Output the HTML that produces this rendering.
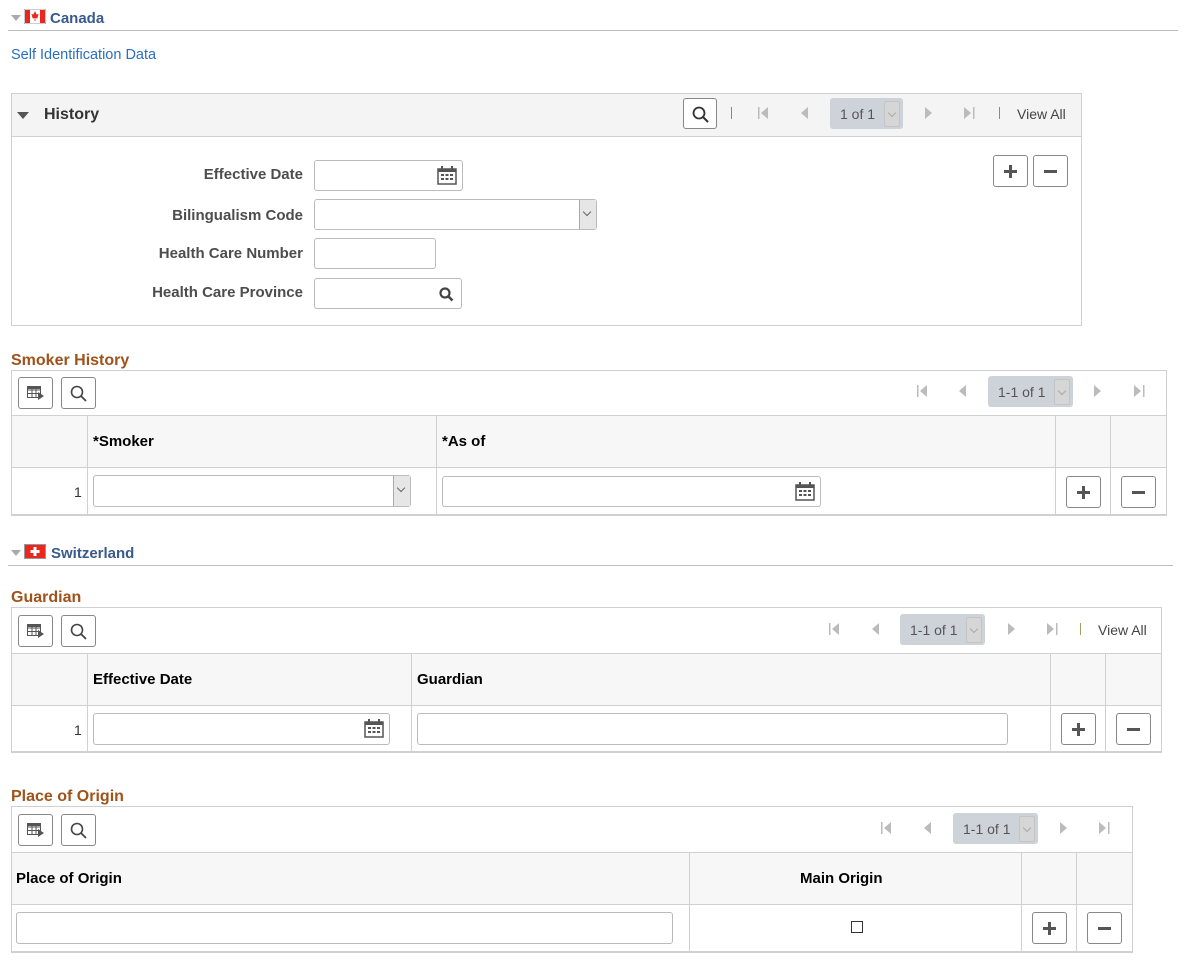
<!DOCTYPE html>
<html><head><meta charset="utf-8"><style>
*{box-sizing:border-box;margin:0;padding:0}
body{width:1190px;height:963px;background:#fff;font-family:"Liberation Sans",Arial,sans-serif;position:relative;overflow:hidden;color:#333}
.a{position:absolute}
.sec{font-weight:bold;font-size:15px;color:#3a5a8c}
.ttl{font-weight:bold;font-size:16px;color:#a0521b}
.lbl{font-weight:bold;font-size:15px;color:#4d4d4d;text-align:right;width:200px}
.in{border:1px solid #bbb;border-radius:3px;background:#fff}
.btn{border:1px solid #888;border-radius:3px;background:#fff;width:35px;height:32px}
.hd{font-weight:bold;font-size:15px;color:#000}
.pg{background:#ced3da;border-radius:3px;height:31px;font-size:14px;color:#555;line-height:31px;padding-left:10px}
.pg i{position:absolute;right:3px;top:3px;width:16px;height:26px;background:#d6d6d6;border:1px solid #c4c4c4;border-radius:2px}
.pg i:after{content:"";position:absolute;left:4px;top:8px;width:5px;height:5px;border-right:1px solid #aaa;border-bottom:1px solid #aaa;transform:rotate(45deg)}
.dd{position:absolute;right:0;top:0;bottom:0;width:17px;background:#e6e6e6;border-left:1px solid #aaa}
.chev{position:absolute;left:4px;top:9px;width:6px;height:6px;border-right:1px solid #666;border-bottom:1px solid #666;transform:rotate(45deg)}
.sep{width:1px;height:12px;background:#888}
.vl{width:1px;background:#d0d0d0}
</style></head><body>

<div class="a" style="left:11px;top:15px;width:0;height:0;border-left:5px solid transparent;border-right:5px solid transparent;border-top:6px solid #aaa"></div>
<svg class="a" style="left:24px;top:9px" width="22" height="15"><rect x="0" y="0" width="22" height="15" fill="#fff" stroke="#999"/><rect x="1" y="1" width="5" height="13" fill="#e8281e"/><rect x="16" y="1" width="5" height="13" fill="#e8281e"/><path d="M11 3 L12.5 6 L14 5.5 L13 9 L11 8.5 L9 9 L8 5.5 L9.5 6 Z M11 9 V12" fill="#e8281e" stroke="#e8281e" stroke-width=".8"/></svg>
<div class="a sec" style="left:50px;top:10px">Canada</div>
<div class="a" style="left:8px;top:30px;width:1170px;height:1px;background:#bbb"></div>
<div class="a" style="left:11px;top:47px;font-size:14.5px;color:#2a6ebf">Self Identification Data</div>

<div class="a" style="left:11px;top:93px;width:1071px;height:233px;border:1px solid #d0d0d0"></div>
<div class="a" style="left:12px;top:94px;width:1069px;height:43px;background:#f4f4f4;border-bottom:1px solid #d0d0d0"></div>
<div class="a" style="left:17px;top:112px;width:0;height:0;border-left:6px solid transparent;border-right:6px solid transparent;border-top:7px solid #555"></div>
<div class="a" style="left:44px;top:106px;font-size:16px;font-weight:bold;color:#333">History</div>
<div class="a btn" style="left:683px;top:98px;width:34px;height:31px"><svg class="a" style="left:8px;top:7px" width="18" height="18"><circle cx="7" cy="7" r="5.5" stroke="#333" stroke-width="1.8" fill="none"/><line x1="11" y1="11" x2="16" y2="16" stroke="#333" stroke-width="2"/></svg></div>
<div class="a sep" style="left:731px;top:107px"></div>
<svg class="a" style="left:758px;top:107px" width="12" height="12"><rect x="0" y="0" width="1.5" height="12" fill="#bbb"/><path d="M10 0 L3 6 L10 12Z" fill="#bbb"/></svg>
<svg class="a" style="left:800px;top:107px" width="10" height="12"><path d="M8 0 L1 6 L8 12Z" fill="#bbb"/></svg>
<div class="a pg" style="left:830px;top:98px;width:73px;padding-top:1px">1 of 1<i></i></div>
<svg class="a" style="left:924px;top:107px" width="10" height="12"><path d="M1 0 L8 6 L1 12Z" fill="#bbb"/></svg>
<svg class="a" style="left:963px;top:107px" width="12" height="12"><path d="M1 0 L8 6 L1 12Z" fill="#bbb"/><rect x="10" y="0" width="1.5" height="12" fill="#bbb"/></svg>
<div class="a sep" style="left:999px;top:107px;background:#4a9"></div>
<div class="a" style="left:1017px;top:106px;font-size:14px;color:#444">View All</div>
<div class="a btn" style="left:993px;top:155px;width:35px;height:32px"><div class="a" style="left:10px;top:14px;width:13px;height:3px;background:#555"></div><div class="a" style="left:15px;top:9px;width:3px;height:13px;background:#555"></div></div>
<div class="a btn" style="left:1033px;top:155px;width:35px;height:32px"><div class="a" style="left:10px;top:14px;width:13px;height:3px;background:#555"></div></div>

<div class="a lbl" style="left:103px;top:166px">Effective Date</div>
<div class="a in" style="left:314px;top:160px;width:149px;height:31px"><svg class="a" style="left:122px;top:5px" width="20" height="19"><rect x="1" y="3" width="18" height="15" fill="none" stroke="#555" stroke-width="1.5"/><rect x="1" y="3" width="18" height="3" fill="#555"/><rect x="4" y="0" width="2" height="4" fill="#555"/><rect x="14" y="0" width="2" height="4" fill="#555"/><g fill="#555"><rect x="4" y="8" width="3" height="2"/><rect x="8.5" y="8" width="3" height="2"/><rect x="13" y="8" width="3" height="2"/><rect x="4" y="12" width="3" height="2"/><rect x="8.5" y="12" width="3" height="2"/><rect x="13" y="12" width="3" height="2"/></g></svg></div>
<div class="a lbl" style="left:103px;top:207px">Bilingualism Code</div>
<div class="a in" style="left:314px;top:199px;width:283px;height:31px"><div class="dd"><div class="chev"></div></div></div>
<div class="a lbl" style="left:103px;top:245px">Health Care Number</div>
<div class="a in" style="left:314px;top:238px;width:122px;height:31px"></div>
<div class="a lbl" style="left:103px;top:284px">Health Care Province</div>
<div class="a in" style="left:314px;top:278px;width:148px;height:31px"><svg class="a" style="left:124px;top:8px" width="15" height="15"><circle cx="6" cy="6" r="4.5" stroke="#444" stroke-width="2.2" fill="none"/><line x1="9" y1="9" x2="13.5" y2="13.5" stroke="#444" stroke-width="2.6"/></svg></div>

<div class="a ttl" style="left:11px;top:352px">Smoker History</div>
<div class="a" style="left:11px;top:370px;width:1156px;height:146px;border:1px solid #d0d0d0;border-bottom:2px solid #d0d0d0"></div>
<div class="a" style="left:12px;top:415px;width:1154px;height:53px;background:#f7f7f7;border-top:1px solid #d0d0d0;border-bottom:1px solid #d0d0d0"></div>
<div class="a vl" style="left:87px;top:415px;height:100px"></div>
<div class="a vl" style="left:436px;top:415px;height:100px"></div>
<div class="a vl" style="left:1055px;top:415px;height:100px"></div>
<div class="a vl" style="left:1110px;top:415px;height:100px"></div>
<div class="a hd" style="left:93px;top:433px">*Smoker</div>
<div class="a hd" style="left:442px;top:433px">*As of</div>
<div class="a" style="left:74px;top:484px;font-size:14px;color:#333">1</div>
<div class="a in" style="left:93px;top:475px;width:318px;height:32px"><div class="dd"><div class="chev"></div></div></div>
<div class="a in" style="left:442px;top:476px;width:379px;height:31px"><svg class="a" style="left:352px;top:5px" width="20" height="19"><rect x="1" y="3" width="18" height="15" fill="none" stroke="#555" stroke-width="1.5"/><rect x="1" y="3" width="18" height="3" fill="#555"/><rect x="4" y="0" width="2" height="4" fill="#555"/><rect x="14" y="0" width="2" height="4" fill="#555"/><g fill="#555"><rect x="4" y="8" width="3" height="2"/><rect x="8.5" y="8" width="3" height="2"/><rect x="13" y="8" width="3" height="2"/><rect x="4" y="12" width="3" height="2"/><rect x="8.5" y="12" width="3" height="2"/><rect x="13" y="12" width="3" height="2"/></g></svg></div>
<div class="a btn" style="left:1066px;top:476px"><div class="a" style="left:10px;top:14px;width:13px;height:3px;background:#555"></div><div class="a" style="left:15px;top:9px;width:3px;height:13px;background:#555"></div></div>
<div class="a btn" style="left:1121px;top:476px"><div class="a" style="left:10px;top:14px;width:13px;height:3px;background:#555"></div></div>
<div class="a btn" style="left:18px;top:377px;width:35px;height:32px"><svg class="a" style="left:8px;top:8px" width="18" height="15"><g fill="none" stroke="#555" stroke-width="1"><rect x="0.5" y="0.5" width="13" height="11"/><line x1="0.5" y1="4" x2="13.5" y2="4"/><line x1="0.5" y1="7.5" x2="13.5" y2="7.5"/><line x1="5" y1="0.5" x2="5" y2="11.5"/><line x1="9" y1="0.5" x2="9" y2="11.5"/></g><rect x="0.5" y="0.5" width="13" height="2.5" fill="#555"/><path d="M11 6 L17 10 L11 14Z" fill="#555"/></svg></div>
<div class="a btn" style="left:61px;top:377px;width:35px;height:32px"><svg class="a" style="left:8px;top:7px" width="18" height="18"><circle cx="7" cy="7" r="5.5" stroke="#444" stroke-width="1.6" fill="none"/><line x1="11" y1="11" x2="16" y2="16" stroke="#444" stroke-width="1.8"/></svg></div>
<svg class="a" style="left:917px;top:385px" width="12" height="12"><rect x="0" y="0" width="1.5" height="12" fill="#bbb"/><path d="M10 0 L3 6 L10 12Z" fill="#bbb"/></svg>
<svg class="a" style="left:958px;top:385px" width="10" height="12"><path d="M8 0 L1 6 L8 12Z" fill="#bbb"/></svg>
<div class="a pg" style="left:988px;top:376px;width:85px;padding-top:1px">1-1 of 1<i></i></div>
<svg class="a" style="left:1093px;top:385px" width="10" height="12"><path d="M1 0 L8 6 L1 12Z" fill="#bbb"/></svg>
<svg class="a" style="left:1133px;top:385px" width="12" height="12"><path d="M1 0 L8 6 L1 12Z" fill="#bbb"/><rect x="10" y="0" width="1.5" height="12" fill="#bbb"/></svg>

<div class="a" style="left:11px;top:550px;width:0;height:0;border-left:5px solid transparent;border-right:5px solid transparent;border-top:6px solid #aaa"></div>
<svg class="a" style="left:24px;top:544px" width="22" height="15"><rect x="0.5" y="0.5" width="21" height="14" fill="#e8281e" stroke="#999"/><rect x="9.5" y="3" width="3" height="9" fill="#fff"/><rect x="6.5" y="6" width="9" height="3" fill="#fff"/></svg>
<div class="a sec" style="left:51px;top:545px">Switzerland</div>
<div class="a" style="left:8px;top:565px;width:1165px;height:1px;background:#bbb"></div>

<div class="a ttl" style="left:11px;top:589px">Guardian</div>
<div class="a" style="left:11px;top:607px;width:1151px;height:146px;border:1px solid #d0d0d0;border-bottom:2px solid #d0d0d0"></div>
<div class="a" style="left:12px;top:653px;width:1149px;height:53px;background:#f7f7f7;border-top:1px solid #d0d0d0;border-bottom:1px solid #d0d0d0"></div>
<div class="a vl" style="left:87px;top:653px;height:99px"></div>
<div class="a vl" style="left:411px;top:653px;height:99px"></div>
<div class="a vl" style="left:1050px;top:653px;height:99px"></div>
<div class="a vl" style="left:1105px;top:653px;height:99px"></div>
<div class="a hd" style="left:93px;top:671px">Effective Date</div>
<div class="a hd" style="left:417px;top:671px">Guardian</div>
<div class="a" style="left:74px;top:722px;font-size:14px;color:#333">1</div>
<div class="a in" style="left:93px;top:713px;width:297px;height:32px"><svg class="a" style="left:270px;top:5px" width="20" height="19"><rect x="1" y="3" width="18" height="15" fill="none" stroke="#555" stroke-width="1.5"/><rect x="1" y="3" width="18" height="3" fill="#555"/><rect x="4" y="0" width="2" height="4" fill="#555"/><rect x="14" y="0" width="2" height="4" fill="#555"/><g fill="#555"><rect x="4" y="8" width="3" height="2"/><rect x="8.5" y="8" width="3" height="2"/><rect x="13" y="8" width="3" height="2"/><rect x="4" y="12" width="3" height="2"/><rect x="8.5" y="12" width="3" height="2"/><rect x="13" y="12" width="3" height="2"/></g></svg></div>
<div class="a in" style="left:417px;top:713px;width:591px;height:32px"></div>
<div class="a btn" style="left:1061px;top:713px"><div class="a" style="left:10px;top:14px;width:13px;height:3px;background:#555"></div><div class="a" style="left:15px;top:9px;width:3px;height:13px;background:#555"></div></div>
<div class="a btn" style="left:1116px;top:713px"><div class="a" style="left:10px;top:14px;width:13px;height:3px;background:#555"></div></div>
<div class="a btn" style="left:18px;top:615px;width:35px;height:32px"><svg class="a" style="left:8px;top:8px" width="18" height="15"><g fill="none" stroke="#555" stroke-width="1"><rect x="0.5" y="0.5" width="13" height="11"/><line x1="0.5" y1="4" x2="13.5" y2="4"/><line x1="0.5" y1="7.5" x2="13.5" y2="7.5"/><line x1="5" y1="0.5" x2="5" y2="11.5"/><line x1="9" y1="0.5" x2="9" y2="11.5"/></g><rect x="0.5" y="0.5" width="13" height="2.5" fill="#555"/><path d="M11 6 L17 10 L11 14Z" fill="#555"/></svg></div>
<div class="a btn" style="left:61px;top:615px;width:35px;height:32px"><svg class="a" style="left:8px;top:7px" width="18" height="18"><circle cx="7" cy="7" r="5.5" stroke="#444" stroke-width="1.6" fill="none"/><line x1="11" y1="11" x2="16" y2="16" stroke="#444" stroke-width="1.8"/></svg></div>
<svg class="a" style="left:829px;top:623px" width="12" height="12"><rect x="0" y="0" width="1.5" height="12" fill="#bbb"/><path d="M10 0 L3 6 L10 12Z" fill="#bbb"/></svg>
<svg class="a" style="left:871px;top:623px" width="10" height="12"><path d="M8 0 L1 6 L8 12Z" fill="#bbb"/></svg>
<div class="a pg" style="left:900px;top:614px;width:85px;padding-top:1px">1-1 of 1<i></i></div>
<svg class="a" style="left:1007px;top:623px" width="10" height="12"><path d="M1 0 L8 6 L1 12Z" fill="#bbb"/></svg>
<svg class="a" style="left:1046px;top:623px" width="12" height="12"><path d="M1 0 L8 6 L1 12Z" fill="#bbb"/><rect x="10" y="0" width="1.5" height="12" fill="#bbb"/></svg>
<div class="a sep" style="left:1080px;top:623px;background:#a96"></div>
<div class="a" style="left:1098px;top:622px;font-size:14px;color:#444">View All</div>

<div class="a ttl" style="left:11px;top:788px">Place of Origin</div>
<div class="a" style="left:11px;top:806px;width:1122px;height:147px;border:1px solid #d0d0d0;border-bottom:2px solid #d0d0d0"></div>
<div class="a" style="left:12px;top:852px;width:1120px;height:53px;background:#f7f7f7;border-top:1px solid #d0d0d0;border-bottom:1px solid #d0d0d0"></div>
<div class="a vl" style="left:689px;top:852px;height:99px"></div>
<div class="a vl" style="left:1021px;top:852px;height:99px"></div>
<div class="a vl" style="left:1076px;top:852px;height:99px"></div>
<div class="a hd" style="left:16px;top:870px">Place of Origin</div>
<div class="a hd" style="left:800px;top:870px">Main Origin</div>
<div class="a in" style="left:16px;top:912px;width:657px;height:32px"></div>
<div class="a" style="left:851px;top:921px;width:12px;height:12px;border:1px solid #333;background:#fff"></div>
<div class="a btn" style="left:1032px;top:912px"><div class="a" style="left:10px;top:14px;width:13px;height:3px;background:#555"></div><div class="a" style="left:15px;top:9px;width:3px;height:13px;background:#555"></div></div>
<div class="a btn" style="left:1087px;top:912px"><div class="a" style="left:10px;top:14px;width:13px;height:3px;background:#555"></div></div>
<div class="a btn" style="left:18px;top:814px;width:35px;height:32px"><svg class="a" style="left:8px;top:8px" width="18" height="15"><g fill="none" stroke="#555" stroke-width="1"><rect x="0.5" y="0.5" width="13" height="11"/><line x1="0.5" y1="4" x2="13.5" y2="4"/><line x1="0.5" y1="7.5" x2="13.5" y2="7.5"/><line x1="5" y1="0.5" x2="5" y2="11.5"/><line x1="9" y1="0.5" x2="9" y2="11.5"/></g><rect x="0.5" y="0.5" width="13" height="2.5" fill="#555"/><path d="M11 6 L17 10 L11 14Z" fill="#555"/></svg></div>
<div class="a btn" style="left:61px;top:814px;width:35px;height:32px"><svg class="a" style="left:8px;top:7px" width="18" height="18"><circle cx="7" cy="7" r="5.5" stroke="#444" stroke-width="1.6" fill="none"/><line x1="11" y1="11" x2="16" y2="16" stroke="#444" stroke-width="1.8"/></svg></div>
<svg class="a" style="left:881px;top:822px" width="12" height="12"><rect x="0" y="0" width="1.5" height="12" fill="#bbb"/><path d="M10 0 L3 6 L10 12Z" fill="#bbb"/></svg>
<svg class="a" style="left:923px;top:822px" width="10" height="12"><path d="M8 0 L1 6 L8 12Z" fill="#bbb"/></svg>
<div class="a pg" style="left:953px;top:813px;width:85px;padding-top:1px">1-1 of 1<i></i></div>
<svg class="a" style="left:1059px;top:822px" width="10" height="12"><path d="M1 0 L8 6 L1 12Z" fill="#bbb"/></svg>
<svg class="a" style="left:1098px;top:822px" width="12" height="12"><path d="M1 0 L8 6 L1 12Z" fill="#bbb"/><rect x="10" y="0" width="1.5" height="12" fill="#bbb"/></svg>
</body></html>
